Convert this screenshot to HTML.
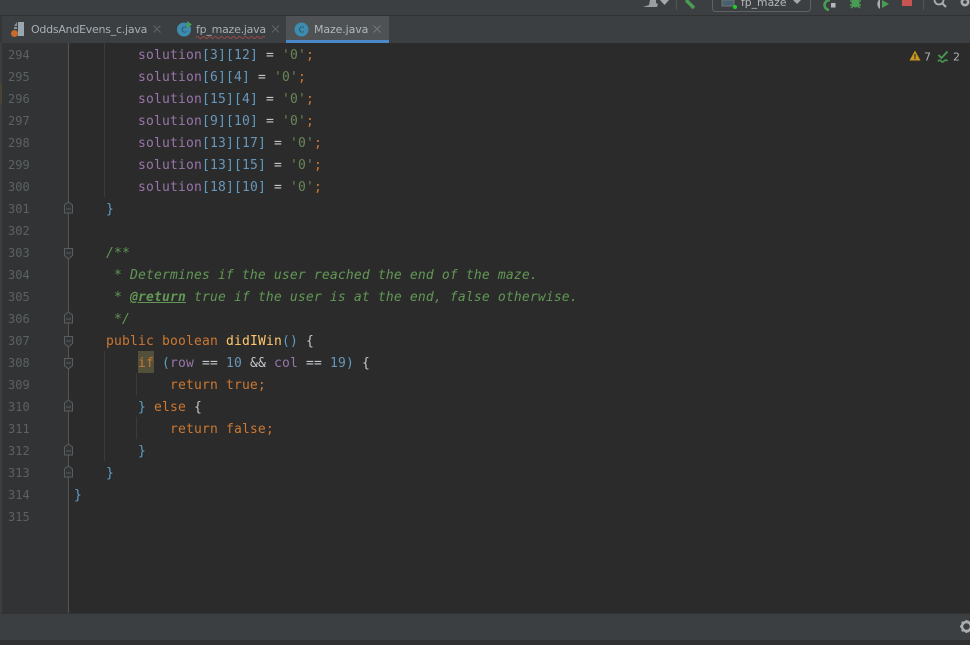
<!DOCTYPE html>
<html><head><meta charset="utf-8">
<style>
html,body{margin:0;padding:0;width:970px;height:645px;overflow:hidden;background:#2b2b2b}
#r{position:relative;width:970px;height:645px;overflow:hidden;font-family:"DejaVu Sans","Liberation Sans",sans-serif}
.a{position:absolute}
.l{position:absolute;left:74px;margin-top:2px;height:22px;font:13px/22px "DejaVu Sans Mono","Liberation Mono",monospace;letter-spacing:.17px;white-space:pre;color:#a9b7c6}
.n{position:absolute;left:8px;margin-top:1px;font:12px/22px "DejaVu Sans Mono","Liberation Mono",monospace;color:#5c6163}
.v{color:#9876aa}.b{color:#6897bb}.s{color:#6a8759}.k{color:#cc7832}.c{font-style:italic;color:#629755}.f{color:#ffc66d}.p{color:#5f9ec4}.o{color:#c4c8cc}
.tab{position:absolute;top:30px;font-size:11px;line-height:0;color:#a5b0b5}
.vg{position:absolute;width:1px;background:#3b3b3b}
</style></head><body><div id="r">
<div class="a" style="left:0;top:0;width:970px;height:15px;background:#3c3f41"></div>
<div class="a" style="left:0;top:15px;width:970px;height:1px;background:#323232"></div>
<div class="a" style="left:0;top:16px;width:970px;height:27px;background:#3c3f41"></div>

<svg class="a" style="left:640px;top:0" width="330" height="16" viewBox="640 0 330 16">
<path d="M643 7l6-2 1-5h6v3l2 1-1 3z" fill="#9a9d9f"/><path d="M660 0h9l-4.500 5z" fill="#a5a8aa"/>
<rect x="676" y="0" width="1" height="10" fill="#515456"/>
<path d="M686 0l8 8" stroke="#499c54" stroke-width="3.500" fill="none"/>
<rect x="712.500" y="-6" width="98" height="17.500" rx="3" fill="none" stroke="#5e6264"/>
<rect x="722" y="0" width="12" height="6" fill="#45606e" stroke="#6e7477"/>
<circle cx="735" cy="7" r="2" fill="#20d020"/>
<text x="741" y="6" font-family="DejaVu Sans, sans-serif" font-size="10.800" fill="#b4b8ba">fp_maze</text>
<path d="M793 0h8l-4 4z" fill="#a5a8aa"/>
<path d="M830 0a6 6 0 0 0 -5 3a5 5 0 0 0 4 7" fill="none" stroke="#499c54" stroke-width="2.600"/>
<rect x="831" y="3" width="4.500" height="4.500" fill="#b4b8ba"/>
<ellipse cx="855.500" cy="3" rx="4" ry="4.500" fill="#499c54"/><path d="M850 1h11M850 5h11M851 8l2-2M860 8l-2-2" stroke="#499c54" stroke-width="1.500"/>
<path d="M880 -1a6 6 0 0 0 0 10z" fill="#a9adaf"/><path d="M882 0l7 4-7 4z" fill="#499c54"/>
<rect x="902" y="-3" width="10" height="9" fill="#c75450"/>
<rect x="923" y="0" width="1" height="10" fill="#515456"/>
<circle cx="939" cy="0" r="4.500" fill="none" stroke="#a9adaf" stroke-width="1.800"/><path d="M942 3l4 4" stroke="#a9adaf" stroke-width="2"/>
<circle cx="965" cy="2" r="4.500" fill="#a9adaf"/><circle cx="965" cy="2" r="1.800" fill="#3c3f41"/>
</svg>

<!-- tabs -->
<div class="a" style="left:0;top:16px;width:2px;height:27px;background:#343638"></div>
<div class="a" style="left:286px;top:16px;width:103px;height:27px;background:#4e5254"></div>
<div class="a" style="left:286px;top:40px;width:103px;height:3px;background:#4a88c7"></div>
<svg class="a" style="left:0;top:16px" width="400" height="27" viewBox="0 16 400 27">
<rect x="18" y="22" width="6" height="14" fill="#9aa7b0"/><path d="M17 22l-3 4h3zM14 27h3v2h-3z" fill="#9aa7b0" opacity=".8"/>
<circle cx="14.500" cy="33.500" r="3.500" fill="#c76a2c"/>
<circle cx="184" cy="29.500" r="7" fill="#3d8baf"/><text x="184" y="32.500" text-anchor="middle" font-size="8" font-family="DejaVu Sans" fill="#2b4a58">C</text>
<path d="M187 21l5 3.500-5 3.500z" fill="#499c54"/>
<circle cx="301.500" cy="29.500" r="7" fill="#3d8baf"/><text x="301.500" y="32.500" text-anchor="middle" font-size="8" font-family="DejaVu Sans" fill="#2b4a58">C</text>
<path d="M196 37.500q1.500-2 3 0t3 0t3 0t3 0t3 0t3 0t3 0t3 0t3 0t3 0t3 0t3 0t3 0t3 0t3 0t3 0t3 0t3 0t3 0t3 0t3 0t3 0t3 0" fill="none" stroke="#b04a4a" stroke-width=".8"/>
<path d="M153.500 25.500l7 7m0-7l-7 7M272 25.500l7 7m0-7l-7 7" stroke="#5f6568" fill="none"/>
<path d="M373.500 25.500l7 7m0-7l-7 7" stroke="#73787a" fill="none"/>
</svg>
<div class="tab" style="left:31px;letter-spacing:-.25px">OddsAndEvens_c.java</div>
<div class="tab" style="left:196px;letter-spacing:-.25px">fp_maze.java</div>
<div class="tab" style="left:314px;letter-spacing:-.12px;color:#b0b8bc">Maze.java</div>

<!-- gutter -->
<div class="a" style="left:0;top:43px;width:2px;height:570px;background:#3c3f41"></div>
<div class="a" style="left:2px;top:43px;width:66px;height:570px;background:#313335"></div>
<div class="a" style="left:0;top:83px;width:2px;height:22px;background:#4a4436"></div>
<div class="a" style="left:68px;top:43px;width:1px;height:570px;background:#555"></div>
<div class="vg" style="left:104px;top:43px;height:154px"></div>
<div class="vg" style="left:104px;top:351px;height:110px"></div>
<div class="vg" style="left:136px;top:373px;height:22px"></div>
<div class="vg" style="left:136px;top:417px;height:22px"></div>

<svg class="a" style="left:62px;top:195px" width="14" height="290" viewBox="62 195 14 290" fill="#313335" stroke="#5a5d5f" stroke-width="1">
<path d="M64.500 213v-8l4-3 4 3v8z"/><path d="M66 209h5"/>
<path d="M64.500 248.500h8v7l-4 3.500-4-3.500z"/><path d="M66 253h5"/>
<path d="M64.500 323v-8l4-3 4 3v8z"/><path d="M66 319h5"/>
<path d="M64.500 336.500h8v7l-4 3.500-4-3.500z"/><path d="M66 341h5"/>
<path d="M64.500 358.500h8v7l-4 3.500-4-3.500z"/><path d="M66 363h5"/>
<path d="M64.500 411v-8l4-3 4 3v8z"/><path d="M66 407h5"/>
<path d="M64.500 455v-8l4-3 4 3v8z"/><path d="M66 451h5"/>
<path d="M64.500 477v-8l4-3 4 3v8z"/><path d="M66 473h5"/>
</svg>

<div class="n" style="top:43px">294</div><div class="n" style="top:65px">295</div><div class="n" style="top:87px">296</div><div class="n" style="top:109px">297</div><div class="n" style="top:131px">298</div><div class="n" style="top:153px">299</div><div class="n" style="top:175px">300</div><div class="n" style="top:197px">301</div><div class="n" style="top:219px">302</div><div class="n" style="top:241px">303</div><div class="n" style="top:263px">304</div><div class="n" style="top:285px">305</div><div class="n" style="top:307px">306</div><div class="n" style="top:329px">307</div><div class="n" style="top:351px">308</div><div class="n" style="top:373px">309</div><div class="n" style="top:395px">310</div><div class="n" style="top:417px">311</div><div class="n" style="top:439px">312</div><div class="n" style="top:461px">313</div><div class="n" style="top:483px">314</div><div class="n" style="top:505px">315</div>

<div class="a" style="left:138px;top:351px;width:16px;height:22px;background:#52503a"></div>

<div class="l" style="top:43px">        <span class="v">solution</span><span class="p">[</span><span class="b">3</span><span class="p">][</span><span class="b">12</span><span class="p">]</span> <span class="o">=</span> <span class="s">'0'</span><span class="k">;</span></div>
<div class="l" style="top:65px">        <span class="v">solution</span><span class="p">[</span><span class="b">6</span><span class="p">][</span><span class="b">4</span><span class="p">]</span> <span class="o">=</span> <span class="s">'0'</span><span class="k">;</span></div>
<div class="l" style="top:87px">        <span class="v">solution</span><span class="p">[</span><span class="b">15</span><span class="p">][</span><span class="b">4</span><span class="p">]</span> <span class="o">=</span> <span class="s">'0'</span><span class="k">;</span></div>
<div class="l" style="top:109px">        <span class="v">solution</span><span class="p">[</span><span class="b">9</span><span class="p">][</span><span class="b">10</span><span class="p">]</span> <span class="o">=</span> <span class="s">'0'</span><span class="k">;</span></div>
<div class="l" style="top:131px">        <span class="v">solution</span><span class="p">[</span><span class="b">13</span><span class="p">][</span><span class="b">17</span><span class="p">]</span> <span class="o">=</span> <span class="s">'0'</span><span class="k">;</span></div>
<div class="l" style="top:153px">        <span class="v">solution</span><span class="p">[</span><span class="b">13</span><span class="p">][</span><span class="b">15</span><span class="p">]</span> <span class="o">=</span> <span class="s">'0'</span><span class="k">;</span></div>
<div class="l" style="top:175px">        <span class="v">solution</span><span class="p">[</span><span class="b">18</span><span class="p">][</span><span class="b">10</span><span class="p">]</span> <span class="o">=</span> <span class="s">'0'</span><span class="k">;</span></div>
<div class="l" style="top:197px">    <span class="p">}</span></div>
<div class="l c" style="top:241px">    /**</div>
<div class="l c" style="top:263px">     * Determines if the user reached the end of the maze.</div>
<div class="l c" style="top:285px">     * <b style="text-decoration:underline">@return</b> true if the user is at the end, false otherwise.</div>
<div class="l c" style="top:307px">     */</div>
<div class="l" style="top:329px">    <span class="k">public boolean</span> <span class="f">didIWin</span><span class="p">()</span> <span class="o">{</span></div>
<div class="l" style="top:351px">        <span class="k">if</span> <span class="p">(</span><span class="v">row</span> <span class="o">==</span> <span class="b">10</span> <span class="o">&amp;&amp;</span> <span class="v">col</span> <span class="o">==</span> <span class="b">19</span><span class="p">)</span> <span class="o">{</span></div>
<div class="l" style="top:373px">            <span class="k">return true;</span></div>
<div class="l" style="top:395px">        <span class="p">}</span> <span class="k">else</span> <span class="o">{</span></div>
<div class="l" style="top:417px">            <span class="k">return false;</span></div>
<div class="l" style="top:439px">        <span class="p">}</span></div>
<div class="l" style="top:461px">    <span class="p">}</span></div>
<div class="l" style="top:483px"><span class="p">}</span></div>

<!-- inspections -->
<svg class="a" style="left:905px;top:47px" width="60" height="18" viewBox="905 47 60 18">
<path d="M915 50.500l5.500 10h-11z" fill="#c9971c"/><rect x="914.400" y="54" width="1.200" height="3.500" fill="#2b2b2b"/><rect x="914.400" y="58" width="1.200" height="1.200" fill="#2b2b2b"/>
<text x="924" y="60.500" font-family="DejaVu Sans, sans-serif" font-size="11" fill="#a9b0b4">7</text>
<path d="M938.500 55l3 3 6-6.500" fill="none" stroke="#499c54" stroke-width="1.800"/>
<path d="M938 61.500q1.500-2.500 3-.5t3 0t3.500 0" fill="none" stroke="#499c54" stroke-width="1.500"/>
<text x="953" y="60.500" font-family="DejaVu Sans, sans-serif" font-size="11" fill="#a9b0b4">2</text>
</svg>

<!-- bottom -->
<div class="a" style="left:0;top:613px;width:970px;height:1px;background:#323232"></div>
<div class="a" style="left:0;top:614px;width:970px;height:26px;background:#3c3f41"></div>
<div class="a" style="left:0;top:640px;width:970px;height:5px;background:#2f3133"></div>
<svg class="a" style="left:958px;top:618px" width="12" height="16" viewBox="958 618 12 16">
<circle cx="966.500" cy="626.500" r="4.500" fill="none" stroke="#a9adaf" stroke-width="2.500"/>
<path d="M966.500 620v2M966.500 631v2M960 626.500h2M961.800 621.800l1.500 1.500M961.800 631.200l1.500-1.500M969 621l-1 1.500M969 632l-1-1.500" stroke="#a9adaf" stroke-width="2"/>
</svg>
</div></body></html>
